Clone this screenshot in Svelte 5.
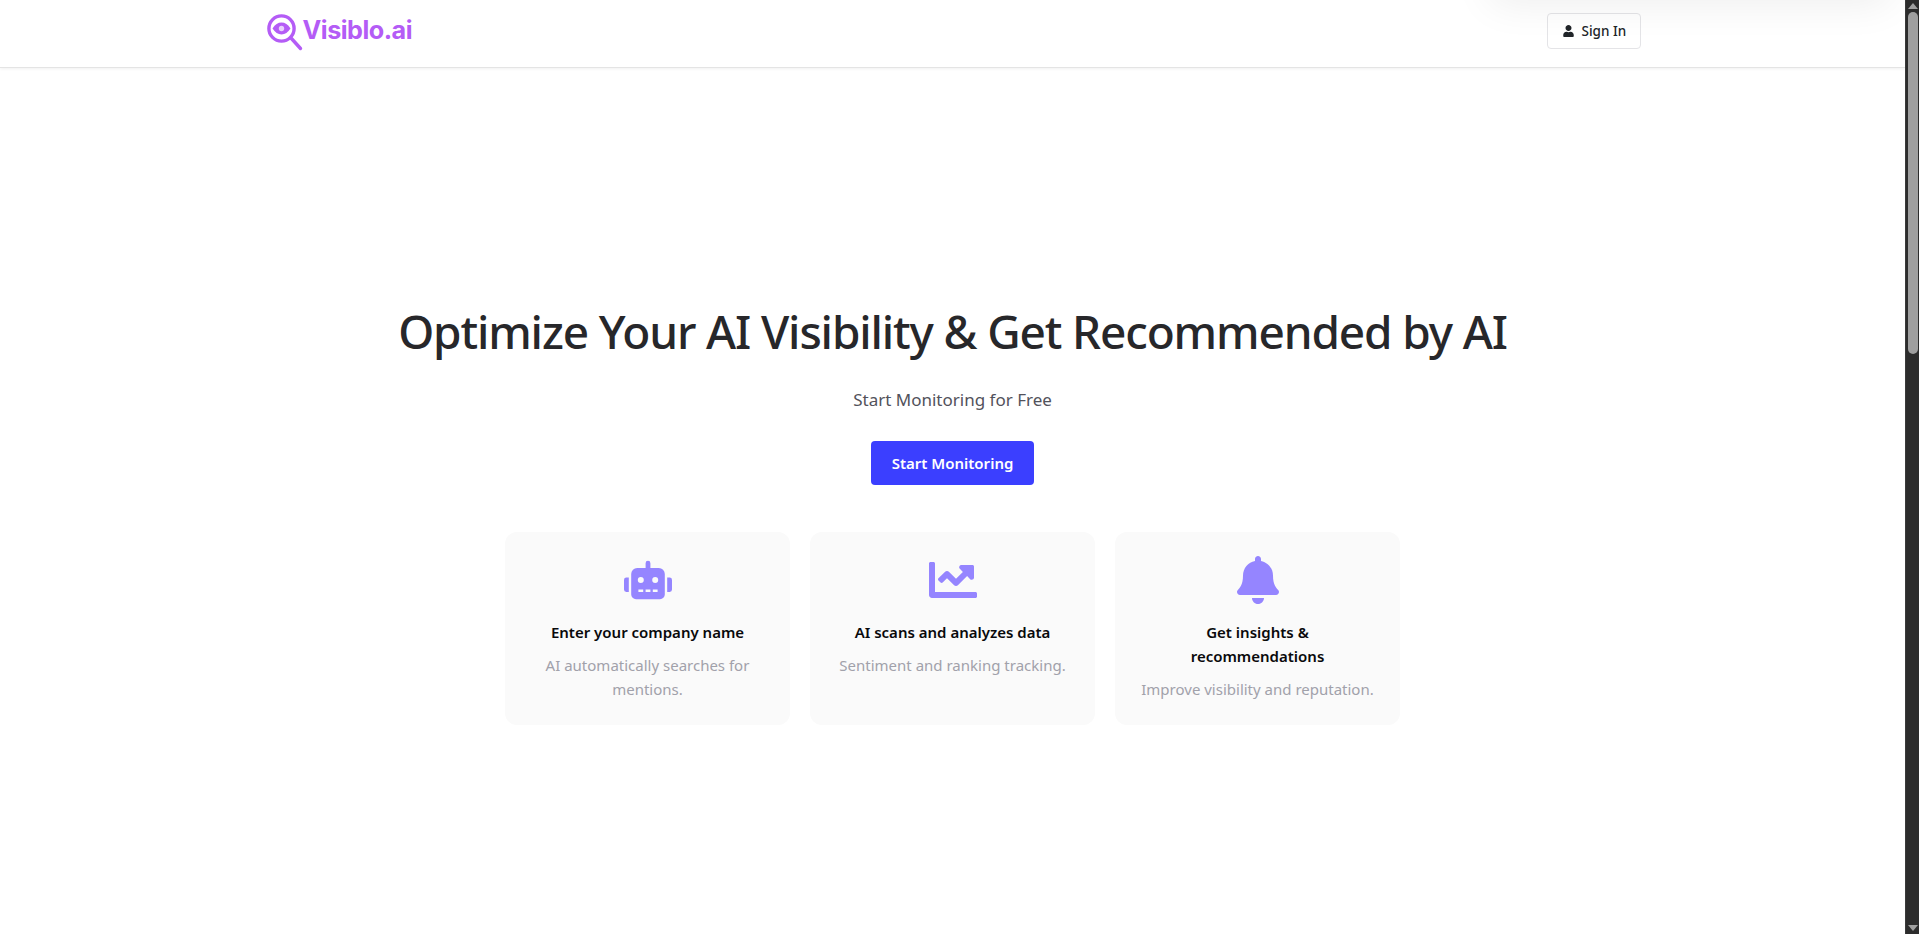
<script>
	const steps = [
		{ icon: 'robot', title: 'Enter your company name', text: 'AI automatically searches for mentions.' },
		{ icon: 'chart', title: 'AI scans and analyzes data', text: 'Sentiment and ranking tracking.' },
		{ icon: 'bell', title: 'Get insights & recommendations', text: 'Improve visibility and reputation.' }
	];

	const icons = {
		robot: {
			box: '0 0 640 512',
			d: 'M32,224H64V416H32A31.96166,31.96166,0,0,1,0,384V256A31.96166,31.96166,0,0,1,32,224Zm512-48V448a64.06328,64.06328,0,0,1-64,64H160a64.06328,64.06328,0,0,1-64-64V176a79.974,79.974,0,0,1,80-80H288V32a32,32,0,0,1,64,0V96H464A79.974,79.974,0,0,1,544,176ZM264,256a40,40,0,1,0-40,40A39.997,39.997,0,0,0,264,256Zm-8,128H192v32h64Zm96,0H288v32h64ZM456,256a40,40,0,1,0-40,40A39.997,39.997,0,0,0,456,256Zm-8,128H384v32h64ZM640,256V384a31.96166,31.96166,0,0,1-32,32H576V224h32A31.96166,31.96166,0,0,1,640,256Z'
		},
		chart: {
			box: '0 0 512 512',
			d: 'M496 384H64V80c0-8.84-7.16-16-16-16H16C7.16 64 0 71.16 0 80v336c0 17.67 14.33 32 32 32h464c8.84 0 16-7.16 16-16v-32c0-8.84-7.16-16-16-16zM464 96H345.94c-21.38 0-32.09 25.85-16.97 40.97l32.4 32.4L288 242.75l-73.37-73.37c-12.5-12.5-32.76-12.5-45.25 0l-68.69 68.69c-6.25 6.25-6.25 16.38 0 22.63l22.62 22.62c6.25 6.25 16.38 6.25 22.63 0L192 237.25l73.37 73.37c12.5 12.5 32.76 12.5 45.25 0l96-96 32.4 32.4c15.12 15.12 40.97 4.41 40.97-16.97V112c.01-8.84-7.15-16-15.99-16z'
		},
		bell: {
			box: '0 0 448 512',
			d: 'M224 512c35.32 0 63.97-28.65 63.97-64H160.03c0 35.35 28.65 64 63.97 64zm215.39-149.71c-19.32-20.76-55.47-51.99-55.47-154.29 0-77.7-54.48-139.9-127.94-155.16V32c0-17.67-14.32-32-31.98-32s-31.98 14.33-31.98 32v20.84C118.56 68.1 64.08 130.3 64.08 208c0 102.3-36.15 133.53-55.47 154.29-6 6.45-8.66 14.16-8.61 21.71.11 16.4 12.98 32 32.1 32h383.8c19.12 0 32-15.6 32.1-32 .05-7.55-2.61-15.27-8.61-21.71z'
		}
	};
</script>

<div class="window">
	<div class="page">
		<nav class="navbar">
			<div class="nav-inner">
				<a class="brand" href="#top">
					<svg class="brand-icon" viewBox="0 0 36 38" fill="none" stroke="#b45cf6" aria-hidden="true">
						<circle cx="14.5" cy="14.5" r="12.6" stroke-width="3.4" />
						<path d="M5.5 14.5C8 10.5 11 8.6 14.5 8.6S21 10.5 23.5 14.5C21 18.5 18 20.4 14.5 20.4S8 18.5 5.5 14.5Z" fill="#b45cf6" stroke="none" />
						<circle cx="14.5" cy="14.5" r="2.7" fill="#e8d0fc" stroke="none" />
						<path d="M24 24L33.5 34.5" stroke-width="3.4" stroke-linecap="round" />
					</svg>
					<span>Visiblo.ai</span>
				</a>
				<button class="signin">
					<svg viewBox="0 0 448 512" aria-hidden="true">
						<path d="M224 256c70.7 0 128-57.3 128-128S294.7 0 224 0 96 57.3 96 128s57.3 128 128 128zm89.6 32h-16.7c-22.2 10.2-46.9 16-72.9 16s-50.6-5.8-72.9-16h-16.7C60.2 288 0 348.2 0 422.4V464c0 26.5 21.5 48 48 48h352c26.5 0 48-21.5 48-48v-41.6c0-74.2-60.2-134.4-134.4-134.4z" />
					</svg>
					Sign In
				</button>
			</div>
		</nav>

		<main class="hero">
			<h1>Optimize Your AI Visibility &amp; Get Recommended by AI</h1>
			<p class="lead">Start Monitoring for Free</p>
			<button class="cta">Start Monitoring</button>
			<div class="cards">
				{#each steps as step}
					<div class="card">
						<svg class="card-icon" viewBox={icons[step.icon].box} aria-hidden="true">
							<path d={icons[step.icon].d} />
						</svg>
						<h3>{step.title}</h3>
						<p>{step.text}</p>
					</div>
				{/each}
			</div>
		</main>

		<div class="toast-shadow"></div>
	</div>

	<div class="scrollbar">
		<span class="arrow up"></span>
		<span class="thumb"></span>
		<span class="arrow down"></span>
	</div>
</div>

<style>
	:global(body) {
		background: #fff;
		overflow: hidden;
	}
	.window {
		display: flex;
		height: 934px;
		overflow: hidden;
		font-family: 'Noto Sans', sans-serif;
		color: #212529;
	}
	.page {
		position: relative;
		flex: 1;
		min-width: 0;
		overflow: hidden;
	}
	.navbar {
		height: 68px;
		box-sizing: border-box;
		border-bottom: 1px solid #e4e4e4;
		box-shadow: 0 1px 3px rgba(0, 0, 0, 0.06);
	}
	.nav-inner {
		width: 1376px;
		margin: 0 auto;
		height: 61px;
		display: flex;
		align-items: center;
		justify-content: space-between;
	}
	.brand {
		display: flex;
		align-items: center;
		color: #b45cf6;
		font-family: Inter, sans-serif;
		font-size: 25.2px;
		font-weight: 700;
		letter-spacing: -0.5px;
		text-decoration: none;
		margin-top: -2px;
	}
	.brand-icon {
		width: 36px;
		height: 38px;
		margin: 7px 0 0 2px;
	}
	.signin {
		display: flex;
		align-items: center;
		gap: 8px;
		width: 94px;
		height: 36px;
		padding: 0 0 0 15px;
		box-sizing: border-box;
		background: #fff;
		border: 1px solid #e4e4e7;
		border-radius: 4px;
		font: 500 13.5px 'Noto Sans', sans-serif;
		color: #212529;
	}
	.signin svg {
		width: 11px;
		height: 12px;
		fill: #212529;
	}
	.hero {
		display: flex;
		flex-direction: column;
		align-items: center;
		padding-top: 231px;
	}
	h1 {
		margin: 0;
		font-size: 46px;
		line-height: 64px;
		font-weight: 500;
		letter-spacing: -1.14px;
		color: #27272a;
	}
	.lead {
		margin: 25px 0 0;
		font-size: 17px;
		line-height: 24px;
		color: #52525b;
	}
	.cta {
		width: 163px;
		height: 44px;
		margin-top: 29px;
		background: #3b3fff;
		color: #fff;
		border: 0;
		border-radius: 4px;
		font: 600 15px 'Noto Sans', sans-serif;
	}
	.cards {
		display: flex;
		gap: 20px;
		margin-top: 47px;
	}
	.card {
		width: 285px;
		box-sizing: border-box;
		padding: 24px;
		background: #fafafa;
		border-radius: 12px;
		text-align: center;
		display: flex;
		flex-direction: column;
		align-items: center;
	}
	.card-icon {
		width: 48px;
		height: 48px;
		fill: #9585ff;
	}
	h3 {
		margin: 16px 0 9px;
		font-size: 15px;
		line-height: 24px;
		font-weight: 600;
		color: #09090b;
	}
	.card p {
		margin: 0;
		font-size: 15px;
		line-height: 24px;
		color: #a1a1aa;
	}
	.toast-shadow {
		position: absolute;
		left: 1490px;
		top: -80px;
		width: 400px;
		height: 80px;
		border-radius: 8px;
		box-shadow: 0 4px 40px rgba(0, 0, 0, 0.07);
	}
	.scrollbar {
		width: 14px;
		flex: none;
		background: #2c2c2c;
		display: flex;
		flex-direction: column;
		align-items: center;
		padding: 3px 0;
		box-sizing: border-box;
		border-left: 1px solid #3a3a3a;
	}
	.thumb {
		width: 10px;
		height: 342px;
		margin-top: 3px;
		border-radius: 5px;
		background: #9f9f9f;
	}
	.arrow {
		width: 0;
		height: 0;
		border-left: 5px solid transparent;
		border-right: 5px solid transparent;
	}
	.arrow.up {
		border-bottom: 6px solid #a0a0a0;
	}
	.arrow.down {
		border-top: 6px solid #a0a0a0;
		margin-top: auto;
	}
</style>
